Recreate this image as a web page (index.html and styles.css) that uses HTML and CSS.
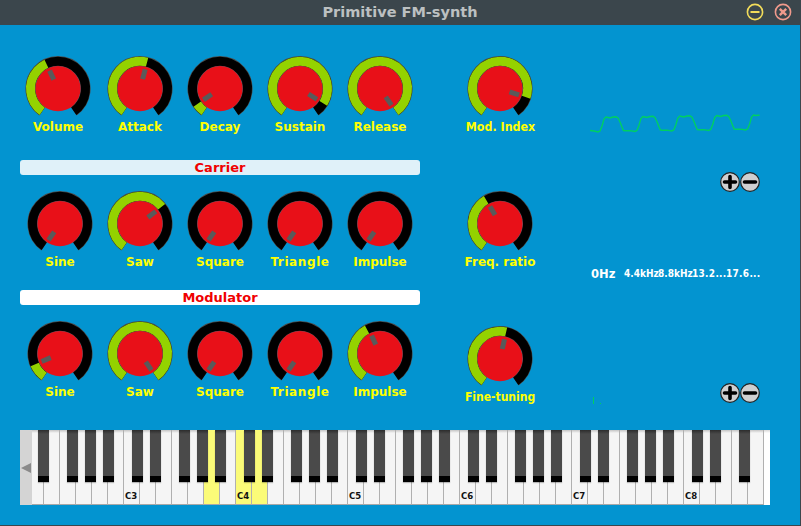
FILE: index.html
```html
<!DOCTYPE html>
<html lang="en">
<head>
<meta charset="utf-8">
<title>Primitive FM-synth</title>
<link rel="stylesheet" href="styles.css">
</head>
<body>
<svg class="defs" width="0" height="0" aria-hidden="true">
  <defs>
    <path id="arc" d="M-15.77 22.53A27.5 27.5 0 1 1 15.77 22.53" pathLength="290" fill="none" stroke-width="9"/>
    <g id="dial-base">
      <path d="M-15.77 22.53A27.5 27.5 0 1 1 15.77 22.53" fill="none" stroke="#4a4a4a" stroke-width="10.2"/>
      <path d="M-15.77 22.53A27.5 27.5 0 1 1 15.77 22.53" fill="none" stroke="#000" stroke-width="9"/>
    </g>
  </defs>
</svg>
<div class="app">
  <header class="titlebar">
    <h1 class="title">Primitive FM-synth</h1>
    <div class="win-buttons">
      <svg class="win-btn" viewBox="0 0 18 18"><circle cx="9" cy="9" r="7.6" fill="none" stroke="#f2dc5a" stroke-width="1.6"/><rect x="4.5" y="8" width="9" height="2" fill="#f2dc5a"/></svg>
      <svg class="win-btn" viewBox="0 0 18 18"><circle cx="9" cy="9" r="7.6" fill="none" stroke="#f09a8c" stroke-width="1.6"/><path d="M5.8 5.8L12.2 12.2M12.2 5.8L5.8 12.2" stroke="#f09a8c" stroke-width="2.4"/></svg>
    </div>
  </header>
  <main class="main">
    <section class="left">
      <div class="knob-row">
        <div class="knob knob-shift"><svg class="dial" viewBox="-34 -34 68 68"><use href="#dial-base"/><use href="#arc" class="level" stroke-dasharray="120 290"/><circle class="face" r="22.6"/><rect class="tick" x="-2.5" y="-20" width="5" height="10" transform="rotate(-25)"/></svg><span class="knob-label">Volume</span></div>
        <div class="knob"><svg class="dial" viewBox="-34 -34 68 68"><use href="#dial-base"/><use href="#arc" class="level" stroke-dasharray="160 290"/><circle class="face" r="22.6"/><rect class="tick" x="-2.5" y="-20" width="5" height="10" transform="rotate(15)"/></svg><span class="knob-label">Attack</span></div>
        <div class="knob"><svg class="dial" viewBox="-34 -34 68 68"><use href="#dial-base"/><use href="#arc" class="level" stroke-dasharray="21 290"/><circle class="face" r="22.6"/><rect class="tick" x="-2.5" y="-20" width="5" height="10" transform="rotate(-124)"/></svg><span class="knob-label">Decay</span></div>
        <div class="knob"><svg class="dial" viewBox="-34 -34 68 68"><use href="#dial-base"/><use href="#arc" class="level" stroke-dasharray="267 290"/><circle class="face" r="22.6"/><rect class="tick" x="-2.5" y="-20" width="5" height="10" transform="rotate(122)"/></svg><span class="knob-label">Sustain</span></div>
        <div class="knob"><svg class="dial" viewBox="-34 -34 68 68"><use href="#dial-base"/><use href="#arc" class="level" stroke-dasharray="290 290"/><circle class="face" r="22.6"/><rect class="tick" x="-2.5" y="-20" width="5" height="10" transform="rotate(145)"/></svg><span class="knob-label">Release</span></div>
      </div>
      <div class="section-bar section-carrier">Carrier</div>
      <div class="knob-row">
        <div class="knob"><svg class="dial" viewBox="-34 -34 68 68"><use href="#dial-base"/><circle class="face" r="22.6"/><rect class="tick" x="-2.5" y="-20" width="5" height="10" transform="rotate(-145)"/></svg><span class="knob-label">Sine</span></div>
        <div class="knob"><svg class="dial" viewBox="-34 -34 68 68"><use href="#dial-base"/><use href="#arc" class="level" stroke-dasharray="197 290"/><circle class="face" r="22.6"/><rect class="tick" x="-2.5" y="-20" width="5" height="10" transform="rotate(52)"/></svg><span class="knob-label">Saw</span></div>
        <div class="knob"><svg class="dial" viewBox="-34 -34 68 68"><use href="#dial-base"/><circle class="face" r="22.6"/><rect class="tick" x="-2.5" y="-20" width="5" height="10" transform="rotate(-145)"/></svg><span class="knob-label">Square</span></div>
        <div class="knob"><svg class="dial" viewBox="-34 -34 68 68"><use href="#dial-base"/><circle class="face" r="22.6"/><rect class="tick" x="-2.5" y="-20" width="5" height="10" transform="rotate(-145)"/></svg><span class="knob-label knob-label-wide">Triangle</span></div>
        <div class="knob"><svg class="dial" viewBox="-34 -34 68 68"><use href="#dial-base"/><circle class="face" r="22.6"/><rect class="tick" x="-2.5" y="-20" width="5" height="10" transform="rotate(-145)"/></svg><span class="knob-label">Impulse</span></div>
      </div>
      <div class="section-bar section-modulator">Modulator</div>
      <div class="knob-row">
        <div class="knob"><svg class="dial" viewBox="-34 -34 68 68"><use href="#dial-base"/><use href="#arc" class="level" stroke-dasharray="32 290"/><circle class="face" r="22.6"/><rect class="tick" x="-2.5" y="-20" width="5" height="10" transform="rotate(-113)"/></svg><span class="knob-label">Sine</span></div>
        <div class="knob"><svg class="dial" viewBox="-34 -34 68 68"><use href="#dial-base"/><use href="#arc" class="level" stroke-dasharray="290 290"/><circle class="face" r="22.6"/><rect class="tick" x="-2.5" y="-20" width="5" height="10" transform="rotate(145)"/></svg><span class="knob-label">Saw</span></div>
        <div class="knob"><svg class="dial" viewBox="-34 -34 68 68"><use href="#dial-base"/><circle class="face" r="22.6"/><rect class="tick" x="-2.5" y="-20" width="5" height="10" transform="rotate(-145)"/></svg><span class="knob-label">Square</span></div>
        <div class="knob"><svg class="dial" viewBox="-34 -34 68 68"><use href="#dial-base"/><circle class="face" r="22.6"/><rect class="tick" x="-2.5" y="-20" width="5" height="10" transform="rotate(-145)"/></svg><span class="knob-label knob-label-wide">Triangle</span></div>
        <div class="knob"><svg class="dial" viewBox="-34 -34 68 68"><use href="#dial-base"/><use href="#arc" class="level" stroke-dasharray="117 290"/><circle class="face" r="22.6"/><rect class="tick" x="-2.5" y="-20" width="5" height="10" transform="rotate(-25)"/></svg><span class="knob-label">Impulse</span></div>
      </div>
    </section>
    <section class="mid">
      <div class="knob"><svg class="dial" viewBox="-34 -34 68 68"><use href="#dial-base"/><use href="#arc" class="level" stroke-dasharray="253 290"/><circle class="face" r="22.6"/><rect class="tick" x="-2.5" y="-20" width="5" height="10" transform="rotate(108)"/></svg><span class="knob-label knob-label-fit">Mod. Index</span></div>
      <div class="knob"><svg class="dial" viewBox="-34 -34 68 68"><use href="#dial-base"/><use href="#arc" class="level" stroke-dasharray="115 290"/><circle class="face" r="22.6"/><rect class="tick" x="-2.5" y="-20" width="5" height="10" transform="rotate(-30)"/></svg><span class="knob-label">Freq. ratio</span></div>
      <div class="knob"><svg class="dial" viewBox="-34 -34 68 68"><use href="#dial-base"/><use href="#arc" class="level" stroke-dasharray="158 290"/><circle class="face" r="22.6"/><rect class="tick" x="-2.5" y="-20" width="5" height="10" transform="rotate(13)"/></svg><span class="knob-label knob-label-tight">Fine-tuning</span></div>
    </section>
    <section class="right">
      <svg class="wave" viewBox="0 0 172 24"><path d="M0 18.5L4 19L8 20l2-1l2-5l2-7l2-2l2 .5l2 .5l3-1l3-.2l2 1.2l2 4l2 5l1.5 3.5l2.5 .3l4-.2l4.9 .9l2-1l2-5l2-7l2-2l2 .5l2 .5l3-1l3-.2l2 1.2l2 4l2 5l1.5 3.5l2.5 .3l4-.2l4.9 .9l2-1l2-5l2-7l2-2l2 .5l2 .5l3-1l3-.2l2 1.2l2 4l2 5l1.5 3.5l2.5 .3l4-.2l4.9 .9l2-1l2-5l2-7l2-2l2 .5l2 .5l3-1l3-.2l2 1.2l2 4l2 5l1.5 3.5l2.5 .3l4-.2l4.9 .9l2-1l2-5l2-7l2-2l2 .5l3-.3l1 0"/></svg>
      <div class="zoom-row zoom-row-scope">
        <svg class="zoom-btn" viewBox="0 0 20 20"><circle cx="10" cy="10" r="9.3" class="zoom-face"/><path d="M10 4.5V15.5M4.5 10H15.5" class="zoom-glyph"/></svg>
        <svg class="zoom-btn" viewBox="0 0 20 20"><circle cx="10" cy="10" r="9.3" class="zoom-face"/><path d="M4.5 10H15.5" class="zoom-glyph"/></svg>
      </div>
      <div class="freqs">
        <span class="freq freq-zero">0Hz</span>
        <span class="freq">4.4kHz</span>
        <span class="freq">8.8kHz</span>
        <span class="freq freq-long">13.2...</span>
        <span class="freq freq-long">17.6...</span>
      </div>
      <div class="zoom-row zoom-row-spectrum">
        <svg class="spectrum" viewBox="0 0 14 8"><rect x="3" y="0" width="1" height="7" fill="#00d060"/><rect x="10" y="6" width="1" height="1" fill="#00d060"/></svg>
        <div class="zoom-pair">
          <svg class="zoom-btn" viewBox="0 0 20 20"><circle cx="10" cy="10" r="9.3" class="zoom-face"/><path d="M10 4.5V15.5M4.5 10H15.5" class="zoom-glyph"/></svg>
          <svg class="zoom-btn" viewBox="0 0 20 20"><circle cx="10" cy="10" r="9.3" class="zoom-face"/><path d="M4.5 10H15.5" class="zoom-glyph"/></svg>
        </div>
      </div>
    </section>
  </main>
  <section class="keyboard">
    <div class="scroll-left"><span class="arrow"></span></div>
    <div class="keys">
      <div class="key"><i class="sharp sharp-d"></i></div><div class="key"></div><div class="key"><i class="sharp sharp-f"></i></div><div class="key"><i class="sharp sharp-g"></i></div><div class="key"><i class="sharp sharp-a"></i></div><div class="key"></div>
      <div class="key"><i class="sharp sharp-c"></i><b class="note">C3</b></div><div class="key"><i class="sharp sharp-d"></i></div><div class="key"></div><div class="key"><i class="sharp sharp-f"></i></div><div class="key"><i class="sharp sharp-g"></i></div><div class="key key-on"><i class="sharp sharp-a"></i></div><div class="key"></div>
      <div class="key key-on"><i class="sharp sharp-c"></i><b class="note">C4</b></div><div class="key key-on"><i class="sharp sharp-d"></i></div><div class="key"></div><div class="key"><i class="sharp sharp-f"></i></div><div class="key"><i class="sharp sharp-g"></i></div><div class="key"><i class="sharp sharp-a"></i></div><div class="key"></div>
      <div class="key"><i class="sharp sharp-c"></i><b class="note">C5</b></div><div class="key"><i class="sharp sharp-d"></i></div><div class="key"></div><div class="key"><i class="sharp sharp-f"></i></div><div class="key"><i class="sharp sharp-g"></i></div><div class="key"><i class="sharp sharp-a"></i></div><div class="key"></div>
      <div class="key"><i class="sharp sharp-c"></i><b class="note">C6</b></div><div class="key"><i class="sharp sharp-d"></i></div><div class="key"></div><div class="key"><i class="sharp sharp-f"></i></div><div class="key"><i class="sharp sharp-g"></i></div><div class="key"><i class="sharp sharp-a"></i></div><div class="key"></div>
      <div class="key"><i class="sharp sharp-c"></i><b class="note">C7</b></div><div class="key"><i class="sharp sharp-d"></i></div><div class="key"></div><div class="key"><i class="sharp sharp-f"></i></div><div class="key"><i class="sharp sharp-g"></i></div><div class="key"><i class="sharp sharp-a"></i></div><div class="key"></div>
      <div class="key"><i class="sharp sharp-c"></i><b class="note">C8</b></div><div class="key"><i class="sharp sharp-d"></i></div><div class="key"></div><div class="key"><i class="sharp sharp-f"></i></div><div class="key"></div>
      <div class="key-tail"></div>
    </div>
  </section>
</div>
</body>
</html>
```
FILE: styles.css
```css
* { box-sizing: border-box; }
html, body { margin: 0; padding: 0; }
body { width: 801px; height: 526px; overflow: hidden; font-family: "DejaVu Sans", sans-serif; }
.defs { position: absolute; }

.app {
  width: 801px; height: 526px;
  display: flex; flex-direction: column;
  background: #0394d0;
  border-right: 1px solid #3b464c;
  border-bottom: 1px solid #3b464c;
}

.titlebar {
  flex: none; height: 25px;
  display: flex; align-items: center; justify-content: center;
  background: #3b464c;
  position: relative;
}
.title { margin: 0; font-size: 14.5px; font-weight: bold; color: #bcc0c1; line-height: 25px; }
.win-buttons { position: absolute; right: 8px; top: 3px; display: flex; gap: 10px; }
.win-btn { width: 18px; height: 18px; display: block; }

.main { flex: 1; display: flex; padding: 29px 0 0 20px; min-height: 0; }
.left { width: 400px; flex: none; }
.knob-row { display: flex; }
.knob { width: 80px; flex: none; display: flex; flex-direction: column; align-items: center; }
.knob-shift { margin-left: -2px; margin-right: 2px; }
.dial { width: 68px; height: 68px; display: block; transform: translateY(.7px); }
.level { stroke: #94d200; }
.face { fill: #e81018; }
.tick { fill: #5a5a5a; }
.knob-label {
  margin-top: -2px; height: 14px; line-height: 14px;
  font-size: 12px; font-weight: bold; color: #ffff00; white-space: nowrap;
}
.knob-label-wide { letter-spacing: .6px; }
.knob-label-fit { transform: scaleX(.925); }
.knob-label-tight { transform: scaleX(.9); }

.section-bar {
  height: 15px; line-height: 15px;
  text-align: center; font-size: 13px; font-weight: bold; color: #f00000;
  border-radius: 3px;
}
.section-carrier { background: #e0f1f9; margin: 26px 0 14px; }
.section-modulator { background: #ffffff; margin: 21px 0 14px; }

.mid { width: 80px; flex: none; margin-left: 40px; display: flex; flex-direction: column; gap: 55px; }

.right { width: 171px; flex: none; margin-left: 50px; }
.wave { display: block; width: 172px; height: 24px; margin-top: 58px; fill: none; }
.wave path { fill: none; stroke: #00d060; stroke-width: 1.4; }
.zoom-row { display: flex; height: 20px; }
.zoom-row-scope { margin-top: 36px; justify-content: flex-end; padding-right: 1px; }
.zoom-row-spectrum { margin-top: 102px; justify-content: space-between; padding-right: 1px; }
.zoom-pair { display: flex; }
.zoom-btn { width: 20px; height: 20px; display: block; }
.zoom-face { fill: #cfcfd0; stroke: #222; stroke-width: 1.2; }
.zoom-glyph { stroke: #000; stroke-width: 3.6; stroke-linecap: round; fill: none; }
.spectrum { width: 14px; height: 8px; align-self: flex-end; margin-bottom: -2px; display: block; }

.freqs { display: flex; margin-top: 75px; height: 14px; line-height: 14px; color: #fff; font-weight: bold; }
.freq {
  width: 34px; flex: none; white-space: nowrap;
  font-family: "DejaVu Sans Condensed", "DejaVu Sans", sans-serif;
  font-stretch: condensed; font-size: 10px;
}
.freq-long { letter-spacing: .3px; }
.freq-zero { font-family: "DejaVu Sans", sans-serif; font-stretch: normal; font-size: 11.5px; padding-left: 1px; }

.keyboard {
  flex: none; height: 75px; width: 750px;
  margin: 0 0 20px 20px;
  display: flex;
  background: #fff;
}
.scroll-left {
  flex: none; width: 12px; position: relative; z-index: 2;
  background: #d4d4d4;
  display: flex; align-items: center; justify-content: center;
}
.arrow { width: 0; height: 0; border-style: solid; border-width: 5px 10px 5px 0; border-color: transparent #8a8a8a transparent transparent; }
.keys { flex: 1; display: flex; min-width: 0; overflow: hidden; }
.key {
  position: relative; flex: none; width: 16px; height: 75px;
  background: linear-gradient(#c4c4c4, #f5f5f5 3px);
  border-right: 1px solid #b0b0b0;
  border-bottom: 1px solid #a8a8a8;
}
.key:first-child { margin-left: -4px; }
.key-on { background: #fbfb78; }
.key-tail { flex: 1; background: linear-gradient(#d8d8d8, #fff 3px); }
.sharp {
  position: absolute; top: 0; z-index: 1; display: block;
  width: 11px; height: 52px;
  background: linear-gradient(#2c2c2c, #4a4a4a 4px);
  border-bottom: 6px solid #000;
  box-shadow: 0 1px 1px rgba(0, 0, 0, .25);
}
.sharp-c { left: 8px; }
.sharp-d { left: 10px; }
.sharp-f { left: 7px; }
.sharp-g { left: 9px; }
.sharp-a { left: 11px; }
.note {
  position: absolute; left: 1px; bottom: 3px;
  font-family: "DejaVu Sans Condensed", "DejaVu Sans", sans-serif;
  font-stretch: condensed; font-size: 9.5px; line-height: 11px; font-weight: bold; color: #111;
}
```
